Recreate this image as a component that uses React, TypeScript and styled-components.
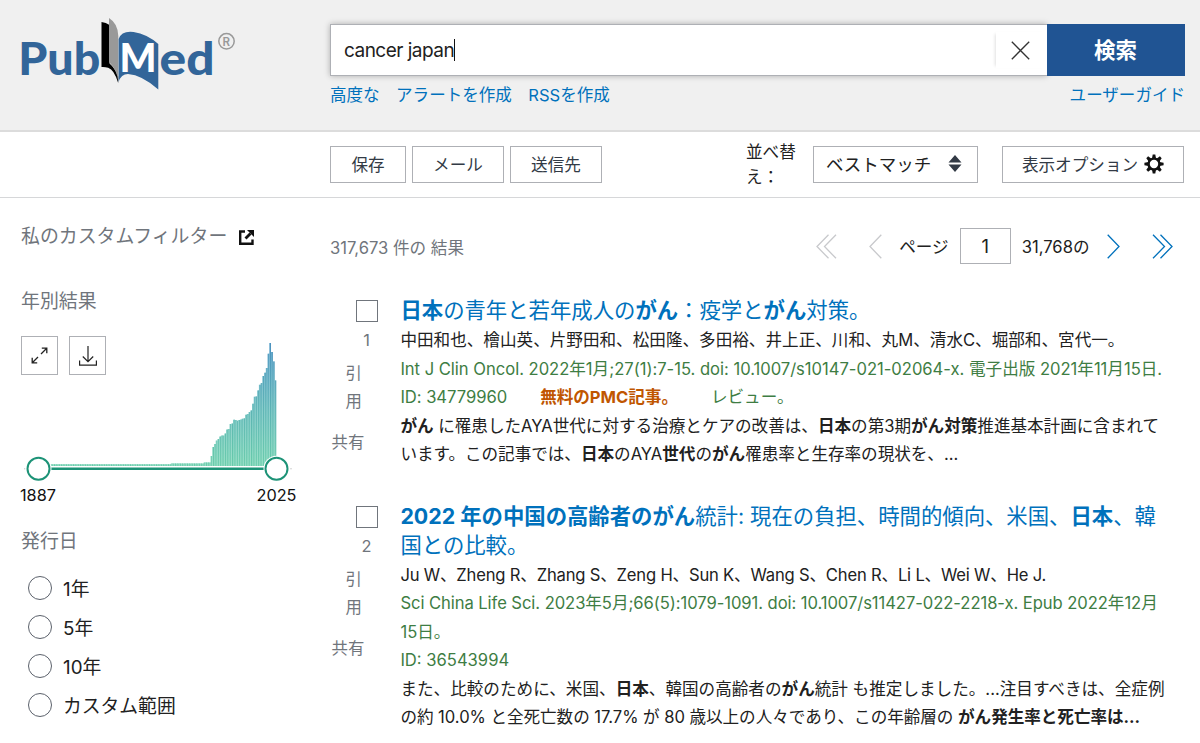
import React from "react";
import styled, { createGlobalStyle } from "styled-components";

const Global = createGlobalStyle`
  *, *::before, *::after { box-sizing: border-box; }
  body { margin: 0; background: #fff; overflow: hidden; }
  body, button, input { font-family: Inter, "Noto Sans CJK JP", sans-serif; font-kerning: normal; }
  body { color: #212121; }
  h1, h2, p { margin: 0; font-weight: 400; }
`;

const Page = styled.div`
  width: 1200px;
  height: 743px;
  overflow: hidden;
  display: flex;
  flex-direction: column;
`;

const Header = styled.header`
  height: 132px;
  flex: none;
  background: #f0f0f0;
  border-bottom: 2px solid #dcdcdc;
  display: flex;
`;

const LogoArea = styled.div`
  width: 330px;
  flex: none;
`;

const SearchArea = styled.div`
  width: 855px;
  padding-top: 24px;
`;

const SearchRow = styled.div`
  display: flex;
  height: 52px;
`;

const SearchField = styled.div`
  width: 717px;
  border: 1px solid #aeb0b5;
  border-right: 0;
  background: #fff;
  box-shadow: 0 0 6px rgba(0, 0, 0, 0.28);
  display: flex;
  align-items: center;
  padding-left: 13px;
  font-size: 19px;
`;

const Query = styled.span`
  letter-spacing: -0.52px;
  white-space: nowrap;
`;

const Caret = styled.span`
  width: 1px;
  height: 22px;
  background: #111;
`;

const ClearButton = styled.div`
  margin-left: auto;
  width: 51px;
  height: 36px;
  display: flex;
  align-items: center;
  justify-content: center;
  box-shadow: -3px 0 3px -2px rgba(0, 0, 0, 0.12);
  padding-right: 3px;
`;

const SearchButton = styled.button`
  width: 138px;
  border: 0;
  padding: 0 1px 4px 0;
  background: #205493;
  color: #fff;
  font-size: 21.5px;
  font-weight: 700;
`;

const Links = styled.nav`
  display: flex;
  gap: 16.5px;
  margin-top: 6px;
  font-size: 16.55px;
  line-height: 26px;
  color: #0071bc;
  white-space: nowrap;
`;

const GuideLink = styled.a`
  margin-left: auto;
`;

const Toolbar = styled.div`
  height: 66px;
  flex: none;
  border-bottom: 1px solid #d6d7d9;
  padding: 14px 16px 0 330px;
  display: flex;
`;

const ToolButton = styled.button<{ $w: number; $mr?: number }>`
  width: ${(p) => p.$w}px;
  height: 37px;
  margin-right: ${(p) => p.$mr ?? 6}px;
  border: 1px solid #aeb0b5;
  background: #fff;
  color: #323a45;
  font-size: 16.6px;
  padding: 0 0 2px;
  display: flex;
  align-items: center;
  justify-content: center;
  gap: 6px;
  white-space: nowrap;
  flex: none;
`;

const SortLabel = styled.div`
  width: 67px;
  margin-left: auto;
  margin-top: -6px;
  font-size: 16.6px;
  line-height: 24.5px;
`;

const SortSelect = styled(ToolButton)`
  color: #212121;
  font-size: 17.5px;
  justify-content: space-between;
  padding: 0 15px 2px 12px;
`;

const Main = styled.main`
  display: flex;
  flex: 1;
`;

const Sidebar = styled.aside`
  width: 330px;
  flex: none;
  padding-left: 21px;
  display: flex;
  flex-direction: column;
`;

const SideHeading = styled.h2<{ $mt: number }>`
  margin-top: ${(p) => p.$mt}px;
  font-size: 18.9px;
  line-height: 28px;
  color: #70757c;
  display: flex;
  align-items: center;
  gap: 11.5px;
`;

const ChartTools = styled.div`
  margin-top: 20px;
  display: flex;
  gap: 11px;
`;

const IconButton = styled.div`
  width: 37px;
  height: 39px;
  border: 1px solid #aeb0b5;
  display: flex;
  align-items: center;
  justify-content: center;
`;

const Timeline = styled.svg`
  display: block;
  margin: -36px 0 0 -21px;
`;

const Years = styled.div`
  display: flex;
  justify-content: space-between;
  width: 276.500px;
  margin: 2px 0 0 -1px;
  font-size: 16.3px;
  line-height: 22px;
  color: #111;
`;

const RadioList = styled.div`
  margin: 12px 0 0 7px;
`;

const RadioRow = styled.label`
  height: 39px;
  display: flex;
  align-items: center;
  gap: 11px;
  font-size: 18.8px;
`;

const RadioDot = styled.span`
  width: 24px;
  height: 24px;
  border: 1px solid #5b616b;
  border-radius: 50%;
`;

const Results = styled.section`
  width: 855px;
`;

const ResultBar = styled.div`
  height: 36px;
  margin: 30px 0 32px;
  display: flex;
  align-items: center;
  justify-content: space-between;
  font-size: 16.6px;
`;

const Count = styled.span`
  color: #70757c;
  margin-top: 2px;
`;

const Pager = styled.div`
  display: flex;
  align-items: center;
  padding-right: 12px;
`;

const PageBox = styled.div`
  width: 51px;
  height: 36px;
  margin: 0 11px;
  border: 1px solid #aeb0b5;
  display: flex;
  align-items: center;
  justify-content: center;
  font-size: 18.5px;
`;

const Chevron = styled.svg<{ $ml?: number; $mr?: number }>`
  margin-left: ${(p) => p.$ml ?? 0}px;
  margin-right: ${(p) => p.$mr ?? 0}px;
`;

const Article = styled.article<{ $h: number }>`
  height: ${(p) => p.$h}px;
  display: flex;
`;

const ArticleSide = styled.div`
  width: 70.4px;
  flex: none;
  font-size: 16.4px;
  line-height: 28.4px;
  color: #70757c;
`;

const Checkbox = styled.div`
  width: 22px;
  height: 22px;
  margin: 4px 0 0 26px;
  border: 1px solid #70757c;
`;

const Num = styled.div`
  width: 73px;
  margin-top: 4px;
  text-align: center;
  line-height: 28px;
`;

const Cite = styled.div`
  width: 16.6px;
  margin: 5px 0 0 15.5px;
`;

const Share = styled.div`
  margin: 12px 0 0 1.5px;
`;

const ArticleBody = styled.div`
  flex: 1;
  white-space: nowrap;
`;

const Title = styled.h1`
  margin-bottom: 1.6px;
  font-size: 21.36px;
  line-height: 28.6px;
  color: #0071bc;
  b { font-weight: 700; }
`;

const Line = styled.p<{ $c?: string; $ls?: number }>`
  font-size: 16.6px;
  line-height: 28.45px;
  letter-spacing: ${(p) => p.$ls ?? 0}px;
  color: ${(p) => p.$c ?? "#212121"};
  b { font-weight: 700; }
`;

const Free = styled.b`
  color: #c05600;
  margin: 0 33px;
`;

const GREEN = "#3e7d43";

const tail = [
  10, 19, 22, 25.5, 27, 29.5, 30.5, 30.5, 32.5, 36.5, 37, 42, 42.5, 46.3, 46, 45.3, 46, 46.5, 47.3, 47.7, 51.3, 52,
  54, 55.6, 62.3, 69.3, 69.6, 75.6, 81.3, 83, 90, 93.3, 98, 112.3, 123, 114, 104.6, 85.6,
];
const bars = Array.from({ length: 139 }, (_, i) => {
  const k = i - (139 - tail.length);
  if (k >= 0) return tail[k];
  if (k > -5) return 3.6;
  if (k > -24) return 2.6;
  return 1.8;
});

const Logo = () => (
  <svg width="250" height="100" viewBox="0 0 250 100" fontFamily="Lato, sans-serif" fontWeight="900">
    <text x="18.200" y="75" fontSize="45.500" fill="#326599" textLength="82" lengthAdjust="spacingAndGlyphs">Pub</text>
    <path d="M101.500 22q4.500.5 8 3v38.500q5 4 8.700 13v6.500q-4-13.500-10-15.300-3.500-1-6.700-.7z" fill="#000" />
    <path d="M109 18q9 5.500 9.300 18v46q-1-12-9.300-20z" fill="#999" />
    <path d="M118.600 39q3-8.500 15-7Q147 34 158.300 44v45.500Q142 75 128 74q-7 0-9.400 8z" fill="#326599" />
    <text x="119.500" y="72" fontSize="40" fill="#fff" textLength="37" lengthAdjust="spacingAndGlyphs">M</text>
    <text x="159.500" y="75" fontSize="45.500" fill="#326599" textLength="55" lengthAdjust="spacingAndGlyphs">ed</text>
    <circle cx="226.500" cy="41.300" r="7.700" fill="none" stroke="#999" strokeWidth="1.500" />
    <text x="222.600" y="45.500" fontSize="11.500" fill="#999" fontFamily="Inter" fontWeight="600">R</text>
  </svg>
);

const Gear = () => (
  <svg width="20" height="20" viewBox="-10 -10 20 20">
    {[0, 45, 90, 135, 180, 225, 270, 315].map((a) => (
      <path key={a} d="M-2 -5.500L-1.300 -9.600H1.300L2 -5.500z" fill="#111" transform={`rotate(${a})`} />
    ))}
    <circle r="5.400" fill="none" stroke="#111" strokeWidth="2.400" />
  </svg>
);

const Side = ({ n }: { n: number }) => (
  <ArticleSide>
    <Checkbox />
    <Num>{n}</Num>
    <Cite>引 用</Cite>
    <Share>共有</Share>
  </ArticleSide>
);

export default function App() {
  return (
    <>
      <Global />
      <Page>
        <Header>
          <LogoArea>
            <Logo />
          </LogoArea>
          <SearchArea>
            <SearchRow>
              <SearchField>
                <Query>cancer japan</Query>
                <Caret />
                <ClearButton>
                  <svg width="19" height="19" viewBox="0 0 19 19" stroke="#333" strokeWidth="1.300">
                    <path d="M.8.8l17.400 17.400M18.200.8L.8 18.200" />
                  </svg>
                </ClearButton>
              </SearchField>
              <SearchButton>検索</SearchButton>
            </SearchRow>
            <Links>
              <a>高度な</a>
              <a>アラートを作成</a>
              <a>RSSを作成</a>
              <GuideLink>ユーザーガイド</GuideLink>
            </Links>
          </SearchArea>
        </Header>
        <Toolbar>
          <ToolButton $w={76}>保存</ToolButton>
          <ToolButton $w={92}>メール</ToolButton>
          <ToolButton $w={92}>送信先</ToolButton>
          <SortLabel>
            並べ替
            <br />
            え：
          </SortLabel>
          <SortSelect $w={165} $mr={24}>
            ベストマッチ
            <svg width="14" height="17" viewBox="0 0 14 17" fill="#323a45">
              <path d="M7 0l6.500 7.500H.5zM7 17l6.500-7.500H.5z" />
            </svg>
          </SortSelect>
          <ToolButton $w={182} $mr={0}>
            表示オプション
            <Gear />
          </ToolButton>
        </Toolbar>
        <Main>
          <Sidebar>
            <SideHeading $mt={25}>
              私のカスタムフィルター
              <svg width="15" height="15" viewBox="0 0 15 15" fill="none" stroke="#111">
                <path d="M6 1.500H1.200v12.300h12.300V9.500" strokeWidth="2.400" />
                <path d="M6.500 8.500l5-5" strokeWidth="2.800" />
                <path d="M8 0h7v7z" fill="#111" stroke="none" />
              </svg>
            </SideHeading>
            <SideHeading $mt={37}>年別結果</SideHeading>
            <ChartTools>
              <IconButton>
                <svg width="17" height="17" viewBox="0 0 17 17" fill="none" stroke="#222" strokeWidth="1.300">
                  <path d="M10 7l5.500-5.500M10.800 1.200h5v5M7 10l-5.500 5.500M1.200 10.800v5h5" />
                </svg>
              </IconButton>
              <IconButton>
                <svg width="18" height="20" viewBox="0 0 18 20" fill="none" stroke="#222" strokeWidth="1.200">
                  <path d="M9 0v15.500M3.800 10.500L9 15.700l5.200-5.200M.6 14.500v4.700h16.800v-4.700" />
                </svg>
              </IconButton>
            </ChartTools>
            <Timeline width="300" height="143" viewBox="0 339 300 143">
              <defs>
                <linearGradient id="fill" gradientUnits="userSpaceOnUse" x1="0" y1="466" x2="0" y2="343">
                  <stop offset="0" stopColor="#8ddcc0" />
                  <stop offset=".45" stopColor="#7bc8c6" />
                  <stop offset="1" stopColor="#5fa3cc" />
                </linearGradient>
                <linearGradient id="edge" gradientUnits="userSpaceOnUse" x1="0" y1="466" x2="0" y2="343">
                  <stop offset="0" stopColor="#4fc09c" />
                  <stop offset="1" stopColor="#3f86b6" />
                </linearGradient>
              </defs>
              {bars.map((h, i) => (
                <g key={i}>
                  <rect x={36 + i * 1.728} y={466 - h} width="1.728" height={h} fill="url(#fill)" />
                  <rect x={37.100 + i * 1.728} y={466 - h} width=".6" height={h} fill="url(#edge)" />
                </g>
              ))}
              <path d="M38 468.700h238" stroke="#1d9377" strokeWidth="2.400" />
              <circle cx="24.800" cy="468.700" r=".8" fill="#ccc" />
              <circle cx="291" cy="468.700" r=".8" fill="#ccc" />
              {[38.500, 276.500].map((x) => (
                <g key={x}>
                  <circle cx={x} cy="468.700" r="13" fill="#fff" />
                  <circle cx={x} cy="468.700" r="11" fill="#fff" stroke="#1d9377" strokeWidth="2" />
                </g>
              ))}
            </Timeline>
            <Years>
              <span>1887</span>
              <span>2025</span>
            </Years>
            <SideHeading $mt={22}>発行日</SideHeading>
            <RadioList>
              {["1年", "5年", "10年", "カスタム範囲"].map((t) => (
                <RadioRow key={t}>
                  <RadioDot />
                  {t}
                </RadioRow>
              ))}
            </RadioList>
          </Sidebar>
          <Results>
            <ResultBar>
              <Count>317,673 件の 結果</Count>
              <Pager>
                <Chevron $mr={32} width="21" height="25" viewBox="0 0 21 25" fill="none" stroke="#c8c9cc" strokeWidth="1.300">
                  <path d="M12.500.7L1 12.500l11.500 11.800M20 .7L8.500 12.500 20 24.300" />
                </Chevron>
                <Chevron $mr={17} width="13" height="25" viewBox="0 0 13 25" fill="none" stroke="#c8c9cc" strokeWidth="1.300">
                  <path d="M12.300.7L1 12.500l11.300 11.800" />
                </Chevron>
                ページ
                <PageBox>1</PageBox>
                31,768の
                <Chevron $ml={17.5} $mr={32} width="13" height="25" viewBox="0 0 13 25" fill="none" stroke="#0071bc" strokeWidth="1.300">
                  <path d="M.7.7L12 12.500.7 24.300" />
                </Chevron>
                <Chevron width="21" height="25" viewBox="0 0 21 25" fill="none" stroke="#0071bc" strokeWidth="1.300">
                  <path d="M1 .7l11.500 11.800L1 24.300M8.500.7L20 12.500 8.500 24.300" />
                </Chevron>
              </Pager>
            </ResultBar>
            <Article $h={206}>
              <Side n={1} />
              <ArticleBody>
                <Title><b>日本</b>の青年と若年成人の<b>がん</b>：疫学と<b>がん</b>対策。</Title>
                <Line>中田和也、檜山英、片野田和、松田隆、多田裕、井上正、川和、丸M、清水C、堀部和、宮代一。</Line>
                <Line $c={GREEN} $ls={-0.02}>Int J Clin Oncol. 2022年1月;27(1):7-15. doi: 10.1007/s10147-021-02064-x. 電子出版 2021年11月15日.</Line>
                <Line $c={GREEN} $ls={-0.03}>ID: 34779960<Free>無料のPMC記事。</Free>レビュー。</Line>
                <Line $ls={-0.02}><b>がん</b> に罹患したAYA世代に対する治療とケアの改善は、<b>日本</b>の第3期<b>がん対策</b>推進基本計画に含まれて</Line>
                <Line $ls={-0.03}>います。この記事では、<b>日本</b>のAYA<b>世代</b>の<b>がん</b>罹患率と生存率の現状を、...</Line>
              </ArticleBody>
            </Article>
            <Article $h={250}>
              <Side n={2} />
              <ArticleBody>
                <Title><b>2022 年の中国の高齢者のがん</b>統計: 現在の負担、時間的傾向、米国、<b>日本</b>、韓<br />国との比較。</Title>
                <Line $ls={-0.19}>Ju W、Zheng R、Zhang S、Zeng H、Sun K、Wang S、Chen R、Li L、Wei W、He J.</Line>
                <Line $c={GREEN} $ls={-0.065}>Sci China Life Sci. 2023年5月;66(5):1079-1091. doi: 10.1007/s11427-022-2218-x. Epub 2022年12月</Line>
                <Line $c={GREEN}>15日。</Line>
                <Line $c={GREEN}>ID: 36543994</Line>
                <Line>また、比較のために、米国、<b>日本</b>、韓国の高齢者の<b>がん</b>統計 も推定しました。...注目すべきは、全症例</Line>
                <Line $ls={-0.045}>の約 10.0% と全死亡数の 17.7% が 80 歳以上の人々であり、この年齢層の <b>がん発生率と死亡率は...</b></Line>
              </ArticleBody>
            </Article>
          </Results>
        </Main>
      </Page>
    </>
  );
}
